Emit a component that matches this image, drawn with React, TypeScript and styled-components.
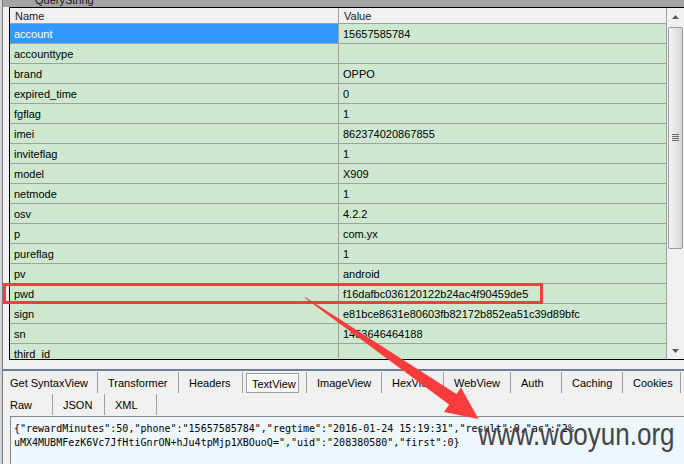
import React from "react";
import styled, { createGlobalStyle } from "styled-components";

const GlobalStyle = createGlobalStyle`
  html, body { margin: 0; padding: 0; background: #f0f0f0; }
  body { width: 684px; height: 464px; overflow: hidden; }
`;

const Frame = styled.div`
  position: relative;
  display: flex;
  width: 684px;
  height: 464px;
  overflow: hidden;
  background: #f0f0f0;
  font-family: "Liberation Sans", Arial, sans-serif;
  font-size: 11px;
  color: #000;
`;

const LeftStrip = styled.div`
  flex: none;
  width: 3px;
  background: linear-gradient(to right, #d4d4d4 0 2px, #6d7b8c 2px 3px);
`;

const Main = styled.div`
  flex: 1;
  min-width: 0;
  display: flex;
  flex-direction: column;
`;

const TopBand = styled.div`
  flex: none;
  height: 7px;
  background: #a3a3a3;
  overflow: hidden;
  padding-left: 32px;
`;

const BandLabel = styled.div`
  margin-top: -5px;
  line-height: 11px;
  color: #151515;
`;

const GridFrame = styled.div`
  flex: none;
  display: flex;
  height: 353px;
  box-sizing: border-box;
  margin-left: 6px;
  border: 1px solid #000;
  border-right: none;
  background: #f0f0f0;
`;

const TableArea = styled.div`
  flex: 1;
  min-width: 0;
  display: flex;
  flex-direction: column;
`;

const HeaderRow = styled.div`
  flex: none;
  display: grid;
  grid-template-columns: 329px 328px;
  height: 16px;
  background: #f0f0f0;
`;

const HeaderCell = styled.div`
  box-sizing: border-box;
  padding: 1px 0 0 5px;
  border-right: 1px solid #a0a0a0;
  border-bottom: 1px solid #a0a0a0;
  line-height: 14px;
  color: #1a1a1a;
`;

const Body = styled.div`
  flex: 1;
  overflow: hidden;
`;

const Row = styled.div`
  display: grid;
  grid-template-columns: 329px 328px;
  height: 20px;
`;

const Cell = styled.div<{ $selected?: boolean }>`
  box-sizing: border-box;
  padding: 2px 0 0 4px;
  border-right: 1px solid #a0a0a0;
  border-bottom: 1px solid #a0a0a0;
  line-height: 17px;
  white-space: nowrap;
  overflow: hidden;
  background: ${(p) => (p.$selected ? "#3399ff" : "#cde8cf")};
  color: ${(p) => (p.$selected ? "#fff" : "#000")};
`;

const Scrollbar = styled.div`
  flex: none;
  width: 17px;
  display: flex;
  flex-direction: column;
  background: #f0f0f0;
`;

const ScrollButton = styled.div`
  flex: none;
  height: 17px;
  display: flex;
  align-items: center;
  justify-content: center;
`;

const Track = styled.div`
  flex: 1;
  padding: 2px 1px 0 1px;
`;

const Thumb = styled.div`
  box-sizing: border-box;
  height: 222px;
  border: 1px solid #9c9c9c;
  border-radius: 2px;
  background: linear-gradient(to right, #f4f4f4, #e2e2e2 60%, #d6d6d6);
  display: flex;
  align-items: center;
  justify-content: center;
`;

const Grip = styled.div`
  width: 7px;
  height: 8px;
  background: repeating-linear-gradient(to bottom, #6a6a6a 0 1px, transparent 1px 2px);
`;

const Gap = styled.div`
  flex: none;
  height: 9px;
`;

const Splitter = styled.div`
  flex: none;
  height: 2px;
  background: #6f7d8f;
`;

const TabRow = styled.div<{ $mt?: number }>`
  flex: none;
  display: flex;
  height: 21px;
  margin-top: ${(p) => p.$mt ?? 0}px;
`;

const Tab = styled.div<{ $w: number; $first?: boolean; $active?: boolean }>`
  box-sizing: border-box;
  flex: none;
  width: ${(p) => p.$w}px;
  padding-left: ${(p) => (p.$first ? 7 : p.$active ? 3 : 10)}px;
  border-right: 1px solid #a0a0a0;
  display: flex;
  align-items: center;
  white-space: nowrap;
`;

const TabLabel = styled.span<{ $active?: boolean }>`
  ${(p) =>
    p.$active
      ? `
    box-sizing: border-box;
    display: flex;
    align-items: center;
    height: 20px;
    padding: 2px 2px 0 5px;
    border: 1px solid #a0a0a0;
    box-shadow: inset 1px 1px 0 #fff;
    background: #f7f7f7;
  `
      : ""}
`;

const TextPane = styled.div`
  flex: 1;
  margin-top: 1px;
  margin-left: 7px;
  padding: 5px 3px;
  border-top: 1px solid #828790;
  border-left: 1px solid #828790;
  background: #eef6ff;
  font-family: "DejaVu Sans Mono", "Liberation Mono", monospace;
  font-size: 10px;
  line-height: 14px;
  white-space: pre;
  color: #000;
`;

const Annotation = styled.svg`
  position: absolute;
  left: 0;
  top: 0;
  pointer-events: none;
`;

const Watermark = styled.div`
  position: absolute;
  left: 478px;
  top: 421px;
  font-family: "Liberation Sans", Arial, sans-serif;
  font-size: 26px;
  line-height: 26px;
  color: #454545;
  transform: scale(1, 1.2);
  transform-origin: 0 50%;
  pointer-events: none;
`;

const rows: [string, string][] = [
  ["account", "15657585784"],
  ["accounttype", ""],
  ["brand", "OPPO"],
  ["expired_time", "0"],
  ["fgflag", "1"],
  ["imei", "862374020867855"],
  ["inviteflag", "1"],
  ["model", "X909"],
  ["netmode", "1"],
  ["osv", "4.2.2"],
  ["p", "com.yx"],
  ["pureflag", "1"],
  ["pv", "android"],
  ["pwd", "f16dafbc036120122b24ac4f90459de5"],
  ["sign", "e81bce8631e80603fb82172b852ea51c39d89bfc"],
  ["sn", "1453646464188"],
  ["third_id", ""],
];

const tabs1 = [
  { label: "Get SyntaxView", w: 95 },
  { label: "Transformer", w: 81 },
  { label: "Headers", w: 64 },
  { label: "TextView", w: 64, active: true },
  { label: "ImageView", w: 75 },
  { label: "HexView", w: 62 },
  { label: "WebView", w: 67 },
  { label: "Auth", w: 51 },
  { label: "Caching", w: 61 },
  { label: "Cookies", w: 58 },
];

const tabs2 = [
  { label: "Raw", w: 50 },
  { label: "JSON", w: 52 },
  { label: "XML", w: 52 },
];

const line1 =
  '{"rewardMinutes":50,"phone":"15657585784","regtime":"2016-01-24 15:19:31","result":0,"ac":"2%';
const line2 = 'uMX4MUBMFezK6Vc7JfHtiGnrON+hJu4tpMjp1XBOuoQ=","uid":"208380580","first":0}';

const Tri = ({ down }: { down?: boolean }) => (
  <svg width="7" height="4" viewBox="0 0 7 4">
    <path d={down ? "M0 0 L7 0 L3.5 4 Z" : "M0 4 L3.5 0 L7 4 Z"} fill="#5a5a5a" />
  </svg>
);

export default function App() {
  return (
    <>
      <GlobalStyle />
      <Frame>
        <LeftStrip />
        <Main>
          <TopBand>
            <BandLabel>QueryString</BandLabel>
          </TopBand>
          <GridFrame>
            <TableArea>
              <HeaderRow>
                <HeaderCell>Name</HeaderCell>
                <HeaderCell>Value</HeaderCell>
              </HeaderRow>
              <Body>
                {rows.map(([n, v], i) => (
                  <Row key={n}>
                    <Cell $selected={i === 0}>{n}</Cell>
                    <Cell>{v}</Cell>
                  </Row>
                ))}
              </Body>
            </TableArea>
            <Scrollbar>
              <ScrollButton>
                <Tri />
              </ScrollButton>
              <Track>
                <Thumb>
                  <Grip />
                </Thumb>
              </Track>
              <ScrollButton>
                <Tri down />
              </ScrollButton>
            </Scrollbar>
          </GridFrame>
          <Gap />
          <Splitter />
          <TabRow $mt={1}>
            {tabs1.map((t, i) => (
              <Tab key={t.label} $w={t.w} $first={i === 0} $active={t.active}>
                <TabLabel $active={t.active}>{t.label}</TabLabel>
              </Tab>
            ))}
          </TabRow>
          <TabRow $mt={1}>
            {tabs2.map((t, i) => (
              <Tab key={t.label} $w={t.w} $first={i === 0}>
                <TabLabel>{t.label}</TabLabel>
              </Tab>
            ))}
          </TabRow>
          <TextPane>
            {line1}
            {"\n"}
            {line2}
          </TextPane>
        </Main>
        <Annotation width="684" height="464" viewBox="0 0 684 464">
          <rect x="4.5" y="284.5" width="537" height="18" fill="none" stroke="#fb3c3c" strokeWidth="3" />
          <polygon points="304.6,296.8 305.6,298.4 449.8,405 457.2,394.6" fill="#fb3c3c" />
          <polygon points="444,412 461,387.5 478.5,419" fill="#fb3c3c" />
        </Annotation>
        <Watermark>www.wooyun.org</Watermark>
      </Frame>
    </>
  );
}
